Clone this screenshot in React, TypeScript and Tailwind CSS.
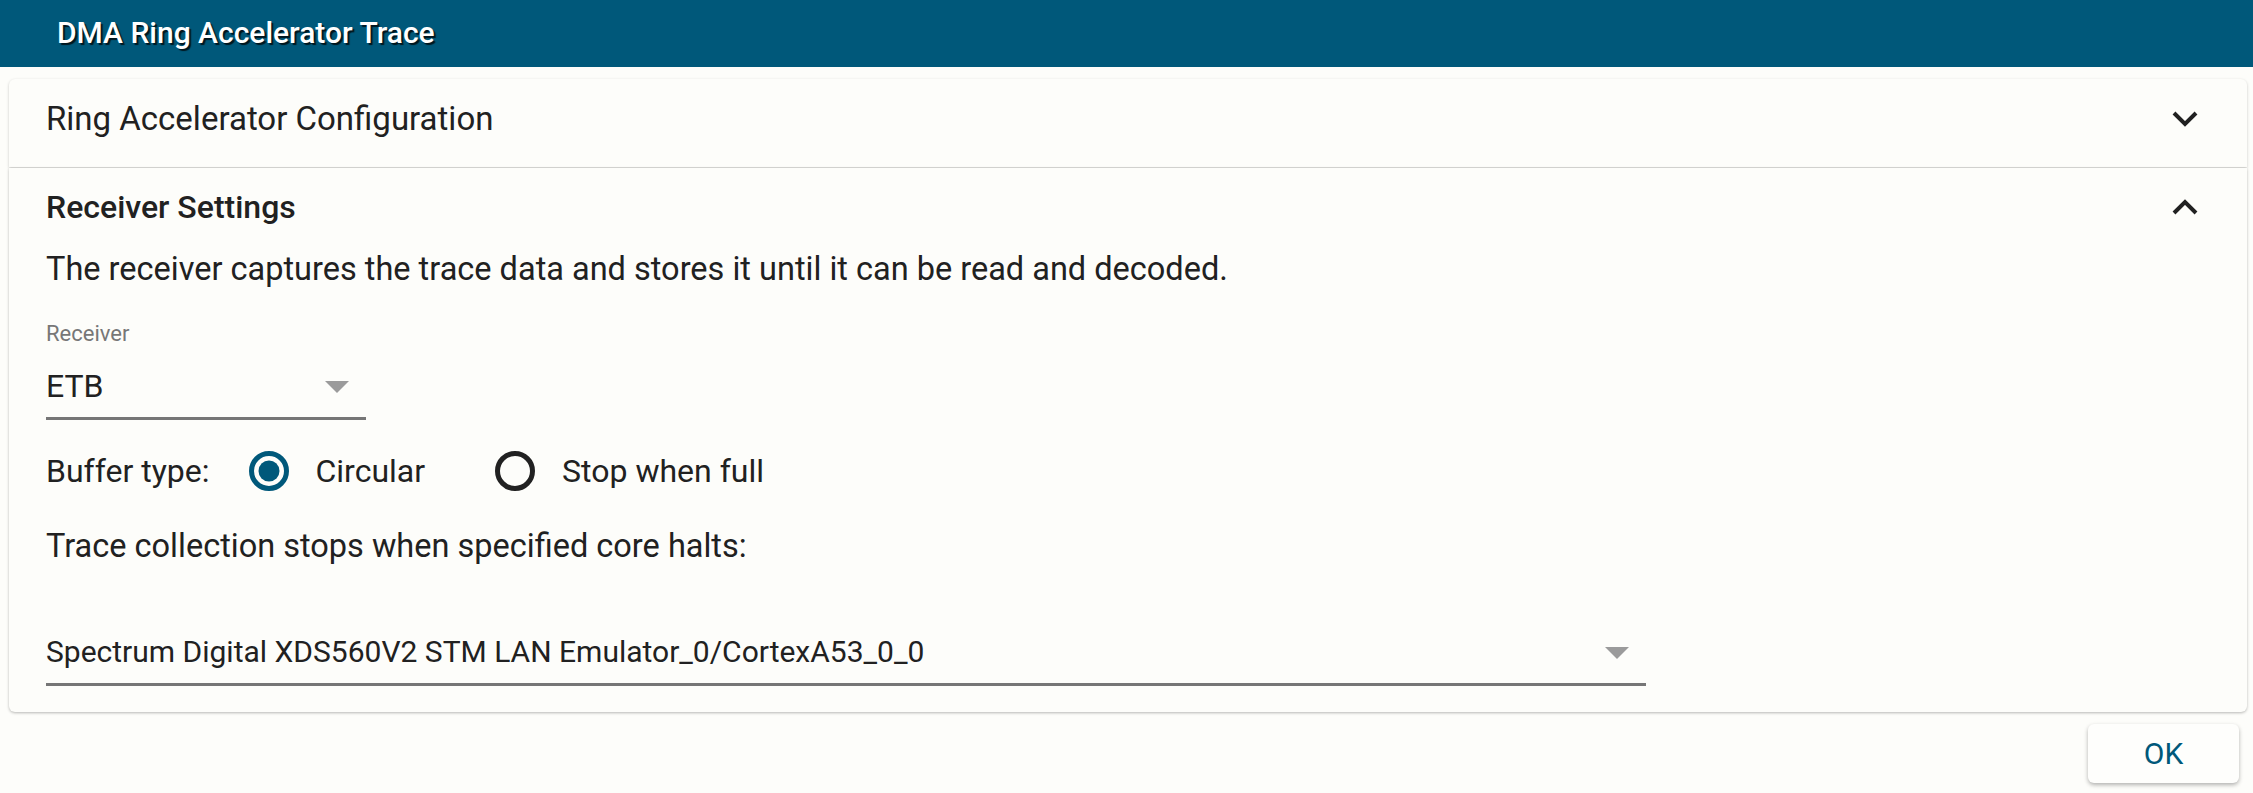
import React from 'react';

const TEAL = '#00587a';

function Chevron({ up }: { up?: boolean }) {
  return (
    <svg width="26" height="16" viewBox="0 0 26 16" className="shrink-0">
      <polyline
        points={up ? '2,14 13,3 24,14' : '2,2 13,13 24,2'}
        fill="none"
        stroke="#212121"
        strokeWidth="4"
      />
    </svg>
  );
}

function Caret() {
  return (
    <svg width="24" height="12" viewBox="0 0 24 12" className="shrink-0">
      <polygon points="0,0 24,0 12,12" fill="#9b9b9b" />
    </svg>
  );
}

function Radio({ checked, label }: { checked?: boolean; label: string }) {
  return (
    <label className="flex items-center gap-[27px]">
      <svg width="40" height="40" viewBox="0 0 40 40" className="shrink-0">
        <circle cx="20" cy="20" r="17.5" fill="none" stroke={checked ? TEAL : '#212121'} strokeWidth="5" />
        {checked && <circle cx="20" cy="20" r="10.5" fill={TEAL} />}
      </svg>
      <span className="h-[40px] leading-[40px]">{label}</span>
    </label>
  );
}

function Select({ value, width, size }: { value: string; width: string; size: string }) {
  return (
    <div className={`flex items-center justify-between border-b-[3px] border-[#767676] pb-[11px] ${width}`}>
      <span className={`h-[40px] leading-[40px] ${size}`}>{value}</span>
      <span className="pr-[17px] pt-[2px]">
        <Caret />
      </span>
    </div>
  );
}

export default function App() {
  return (
    <div
      className="min-h-screen bg-[#fdfdfa] text-[32px] text-[#212121]"
      style={{ fontFamily: 'Roboto, "Liberation Sans", sans-serif' }}
    >
      <header className="flex h-[67px] items-center bg-[#00587a] pb-[2px] pl-[57px]">
        <h1 className="text-[30px] font-medium text-white [text-shadow:2px_2px_1px_rgba(0,0,0,0.75)]">
          DMA Ring Accelerator Trace
        </h1>
      </header>

      <div className="pl-[9px] pr-[6px] pt-[12px]">
        <section className="rounded-t-[6px] bg-[#fdfdfa] shadow-[0_1px_3px_rgba(0,0,0,0.22)]">
          <div className="flex h-[88px] items-center justify-between pb-[8px] pl-[37px] pr-[49px]">
            <span className="text-[33px] leading-[40px]">Ring Accelerator Configuration</span>
            <Chevron />
          </div>
        </section>

        <section className="mt-[1px] rounded-b-[6px] bg-[#fdfdfa] pb-[26px] pl-[37px] pr-[49px] pt-[19px] shadow-[0_1px_3px_rgba(0,0,0,0.28)]">
          <div className="flex items-center justify-between">
            <span className="font-medium leading-[40px]">Receiver Settings</span>
            <Chevron up />
          </div>
          <p className="mt-[22px] text-[32.5px] leading-[40px]">
            The receiver captures the trace data and stores it until it can be read and decoded.
          </p>

          <div className="mt-[32px] text-[22px] leading-[26px] text-[#777777]">Receiver</div>
          <div className="mt-[19px]">
            <Select value="ETB" width="w-[320px]" size="text-[32px]" />
          </div>

          <div className="mt-[31px] flex items-center">
            <span className="mr-[39px] leading-[40px]">Buffer type:</span>
            <div className="flex items-center gap-[70px]">
              <Radio checked label="Circular" />
              <Radio label="Stop when full" />
            </div>
          </div>

          <p className="mt-[35px] text-[32.5px] leading-[40px]">Trace collection stops when specified core halts:</p>

          <div className="mt-[66px]">
            <Select
              value="Spectrum Digital XDS560V2 STM LAN Emulator_0/CortexA53_0_0"
              width="w-[1600px]"
              size="text-[30px]"
            />
          </div>
        </section>

        <div className="flex justify-end pr-[8px] pt-[12px]">
          <button
            type="button"
            className="h-[59px] w-[151px] rounded-[6px] bg-[#fefefc] text-[30px] text-[#00587a] shadow-[0_2px_4px_rgba(0,0,0,0.3)]"
          >
            OK
          </button>
        </div>
      </div>
    </div>
  );
}
